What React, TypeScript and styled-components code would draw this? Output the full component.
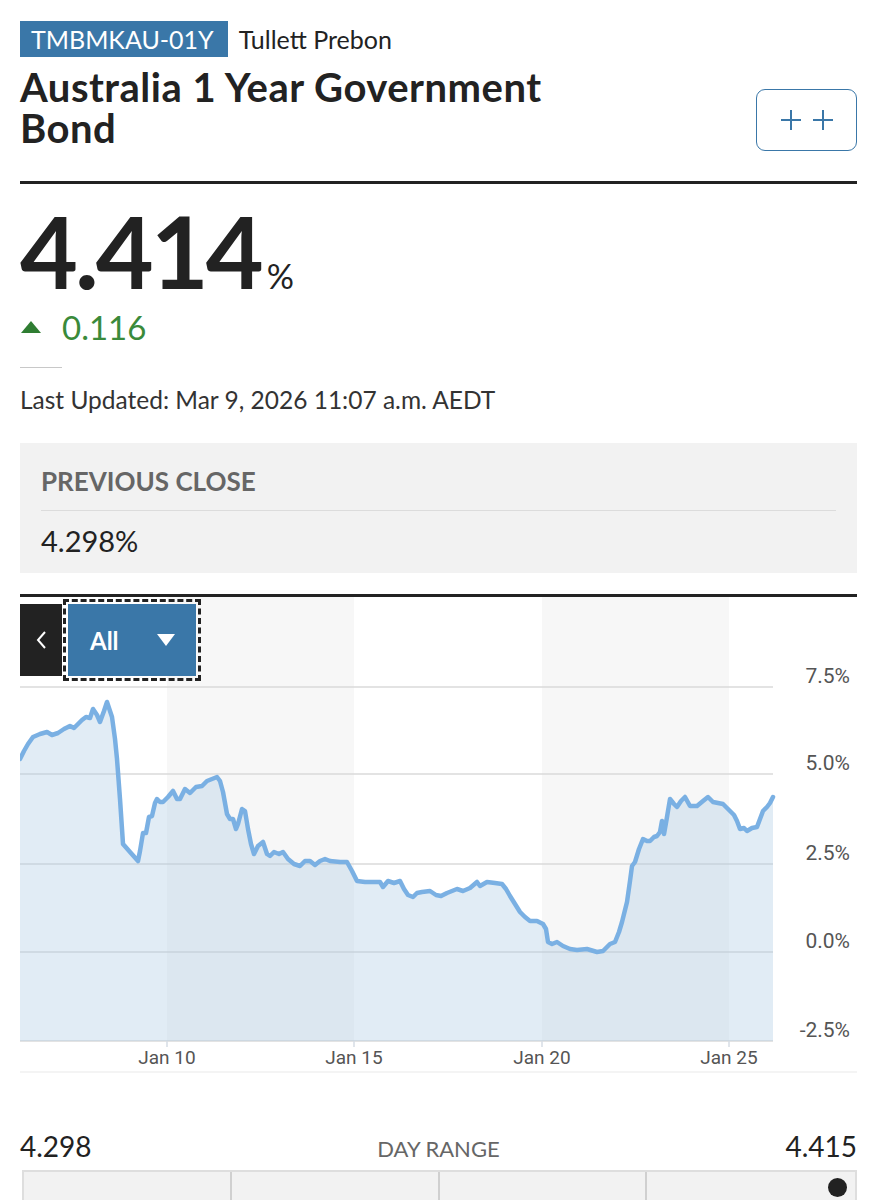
import React from "react";
import styled, { createGlobalStyle } from "styled-components";

const GlobalStyle = createGlobalStyle`
  html, body { margin: 0; padding: 0; background: #ffffff; }
  body { font-family: "Lato", "Noto Sans", sans-serif; color: #222; }
  * { box-sizing: border-box; }
`;

const Page = styled.div`
  width: 878px;
  padding: 21px 21px 0 20px;
  display: flex;
  flex-direction: column;
`;

const MetaRow = styled.div`
  display: flex;
  align-items: center;
  gap: 11px;
`;

const Badge = styled.span`
  background: #3a77a8;
  color: #fff;
  font-size: 25px;
  line-height: 36px;
  padding: 0 14px 0 11px;
`;

const Source = styled.span`
  font-size: 25px;
  color: #222;
`;

const TitleRow = styled.div`
  display: flex;
  justify-content: space-between;
  align-items: flex-start;
  margin-top: 10px;
`;

const Title = styled.h1`
  margin: 0;
  max-width: 570px;
  font-size: 40px;
  line-height: 41px;
  font-weight: 700;
  letter-spacing: 0.5px;
  color: #222;
`;

const CompareButton = styled.button`
  margin-top: 22px;
  width: 101px;
  height: 62px;
  border: 1.5px solid #3a77a8;
  border-radius: 9px;
  background: #fff;
  display: flex;
  align-items: center;
  justify-content: center;
  gap: 10px;
  padding: 0;
`;

const Rule = styled.div<{ $top: number }>`
  height: 3px;
  background: #222;
  margin-top: ${(p) => p.$top}px;
`;

const PriceRow = styled.div`
  display: flex;
  align-items: baseline;
  margin-top: 22px;
  height: 88px;
`;

const Price = styled.span`
  font-size: 100px;
  line-height: 88px;
  font-weight: 700;
  letter-spacing: -3px;
  color: #222;
`;

const Unit = styled.span`
  font-size: 34px;
  line-height: 40px;
  margin-left: 6px;
  color: #222;
`;

const ChangeRow = styled.div`
  display: flex;
  align-items: center;
  gap: 20px;
  margin-top: 15px;
  color: #3a8a3a;
`;

const ChangeValue = styled.span`
  font-size: 33px;
  line-height: 36px;
`;

const ShortRule = styled.div`
  width: 42px;
  height: 1px;
  background: #c8c8c8;
  margin-top: 22px;
`;

const Updated = styled.div`
  font-size: 24.5px;
  line-height: 30px;
  color: #333;
  margin-top: 17px;
`;

const StatBox = styled.div`
  margin-top: 28px;
  background: #f2f2f2;
  padding: 21px 21px 15px 21px;
`;

const StatLabel = styled.div`
  font-size: 26px;
  font-weight: 700;
  color: #666;
  line-height: 34px;
`;

const StatDivider = styled.div`
  height: 1px;
  background: #dcdcdc;
  margin: 12px 0 13px;
`;

const StatValue = styled.div`
  font-size: 29px;
  line-height: 34px;
  color: #222;
`;

const ChartSection = styled.div`
  position: relative;
  margin-top: 21px;
  border-top: 3px solid #222;
`;

const ChartSvg = styled.svg`
  display: block;
`;

const Controls = styled.div`
  position: absolute;
  top: 7px;
  left: 0;
  display: flex;
  gap: 6px;
`;

const BackButton = styled.button`
  width: 42px;
  height: 72px;
  background: #222;
  border: none;
  color: #fff;
  display: flex;
  align-items: center;
  justify-content: center;
  padding: 0;
`;

const RangeButton = styled.button`
  width: 128px;
  height: 72px;
  background: #3a77a8;
  border: none;
  outline: 3px dashed #222;
  outline-offset: 2px;
  color: #fff;
  font-family: "Lato", sans-serif;
  font-size: 24px;
  font-weight: 700;
  display: flex;
  align-items: center;
  justify-content: space-between;
  padding: 0 20px 0 22px;
`;

const RangeHead = styled.div`
  display: flex;
  justify-content: space-between;
  align-items: baseline;
  margin-top: 55px;
`;

const RangeEnd = styled.span`
  font-size: 28px;
  line-height: 34px;
  color: #222;
`;

const RangeLabel = styled.span`
  font-size: 22px;
  color: #666;
`;

const RangeBar = styled.div`
  margin: 7px 0 0 2px;
  height: 40px;
  background: #f2f2f2;
  border: 2px solid #dedede;
  border-bottom: none;
  display: grid;
  grid-template-columns: repeat(4, 1fr);
  position: relative;
`;

const RangeSegment = styled.div<{ $last?: boolean }>`
  border-right: ${(p) => (p.$last ? "none" : "2px solid #d0d0d0")};
`;

const RangeDot = styled.div`
  position: absolute;
  right: 8px;
  top: 6px;
  width: 19px;
  height: 19px;
  border-radius: 50%;
  background: #222;
`;

const raw: [number, number][] = [
  [20, 760], [24, 752], [28, 745], [33, 738], [40, 735], [47, 733], [52, 736], [58, 734],
  [64, 730], [70, 727], [74, 729], [77, 726], [82, 721], [86, 718], [90, 719], [93, 710],
  [97, 716], [100, 723], [104, 712], [107, 703], [110, 712], [112, 718], [115, 740],
  [117, 760], [120, 800], [123, 845], [130, 853], [138, 862], [140, 852], [143, 834],
  [146, 834], [149, 818], [152, 817], [155, 804], [157, 800], [160, 803], [163, 803],
  [168, 798], [173, 792], [177, 800], [180, 800], [185, 790], [190, 794], [196, 788],
  [202, 787], [207, 782], [212, 780], [217, 778], [220, 782], [223, 793], [227, 815],
  [230, 820], [233, 820], [236, 830], [238, 825], [242, 810], [245, 812], [248, 830],
  [251, 845], [254, 855], [258, 847], [263, 843], [267, 855], [270, 857], [274, 853],
  [279, 855], [283, 853], [288, 860], [294, 865], [300, 867], [305, 862], [310, 862],
  [315, 866], [320, 862], [325, 860], [330, 862], [340, 863], [347, 863], [352, 872],
  [357, 882], [365, 883], [372, 883], [380, 883], [383, 888], [388, 882], [394, 884],
  [400, 882], [404, 890], [408, 896], [413, 898], [417, 894], [422, 893], [430, 892],
  [436, 896], [441, 897], [447, 894], [452, 892], [457, 890], [463, 892], [470, 889],
  [477, 883], [480, 887], [487, 883], [495, 884], [502, 885], [506, 890], [510, 897],
  [515, 905], [520, 913], [525, 918], [530, 922], [537, 922], [543, 925], [546, 930],
  [548, 943], [552, 945], [557, 943], [563, 947], [570, 950], [577, 951], [587, 950],
  [597, 953], [603, 952], [607, 948], [610, 945], [615, 943], [619, 933], [622, 923],
  [627, 903], [630, 882], [632, 867], [635, 863], [639, 850], [643, 840], [647, 842],
  [650, 842], [654, 838], [657, 837], [660, 833], [662, 822], [664, 835], [667, 818],
  [670, 800], [674, 805], [677, 808], [681, 802], [685, 798], [690, 807], [697, 807],
  [703, 802], [708, 798], [713, 803], [718, 804], [723, 805], [727, 809], [730, 812],
  [734, 816], [737, 822], [740, 830], [744, 829], [747, 832], [752, 829], [757, 828],
  [760, 820], [763, 812], [767, 808], [770, 804], [773, 798],
];

const OX = 20;
const OY = 598;
const pts = raw.map(([x, y]) => [x - OX, y - OY] as [number, number]);
const linePath = pts.map(([x, y], i) => `${i ? "L" : "M"}${x},${y}`).join(" ");
const BOTTOM = 1042 - OY;
const PLOT_R = 773 - OX;
const areaPath = `${linePath} L${PLOT_R},${BOTTOM} L0,${BOTTOM} Z`;

const grid = [
  { y: 688, label: "7.5%" },
  { y: 775, label: "5.0%" },
  { y: 865, label: "2.5%" },
  { y: 953, label: "0.0%" },
  { y: 1042, label: "-2.5%" },
];

const ticks = [
  { x: 167, label: "Jan 10" },
  { x: 354, label: "Jan 15" },
  { x: 542, label: "Jan 20" },
  { x: 729, label: "Jan 25" },
];

const bands = [
  [167, 354],
  [542, 729],
];

function Chart() {
  return (
    <ChartSvg width={837} height={477} viewBox="0 0 837 477">
      {bands.map(([a, b]) => (
        <rect key={a} x={a - OX} y={0} width={b - a} height={BOTTOM} fill="#f7f7f7" />
      ))}
      {grid.map((g) => (
        <line key={g.label} x1={0} x2={PLOT_R} y1={g.y - OY} y2={g.y - OY} stroke="#dadada" strokeWidth={1.5} />
      ))}
      <path d={areaPath} fill="rgb(170,200,226)" fillOpacity={0.35} />
      <path d={linePath} fill="none" stroke="#7ab0e3" strokeWidth={4.5} strokeLinejoin="round" strokeLinecap="round" />
      {ticks.map((t) => (
        <line key={t.label} x1={t.x - OX} x2={t.x - OX} y1={BOTTOM} y2={BOTTOM + 6} stroke="#d6dde4" strokeWidth={1.5} />
      ))}
      {grid.map((g) => (
        <text
          key={g.label}
          x={850 - OX}
          y={g.y - OY - 4}
          textAnchor="end"
          fontFamily="Roboto, sans-serif"
          fontSize={21}
          fill="#555"
        >
          {g.label}
        </text>
      ))}
      {ticks.map((t) => (
        <text
          key={t.label}
          x={t.x - OX}
          y={1065 - OY}
          textAnchor="middle"
          fontFamily="Roboto, sans-serif"
          fontSize={19}
          fill="#555"
        >
          {t.label}
        </text>
      ))}
      <line x1={0} x2={837} y1={1073 - OY} y2={1073 - OY} stroke="#f0f0f0" strokeWidth={1.5} />
    </ChartSvg>
  );
}

const Plus = () => (
  <svg width="22" height="22" viewBox="0 0 22 22">
    <path d="M11 1 V21 M1 11 H21" stroke="#3a77a8" strokeWidth="2" fill="none" />
  </svg>
);

export default function App() {
  return (
    <>
      <GlobalStyle />
      <Page>
        <MetaRow>
          <Badge>TMBMKAU-01Y</Badge>
          <Source>Tullett Prebon</Source>
        </MetaRow>
        <TitleRow>
          <Title>Australia 1 Year Government Bond</Title>
          <CompareButton aria-label="Compare">
            <Plus />
            <Plus />
          </CompareButton>
        </TitleRow>
        <Rule $top={30} />
        <PriceRow>
          <Price>4.414</Price>
          <Unit>%</Unit>
        </PriceRow>
        <ChangeRow>
          <svg width="22" height="14" viewBox="0 0 22 14">
            <polygon points="11,1 21,13 1,13" fill="#2f7d32" />
          </svg>
          <ChangeValue>0.116</ChangeValue>
        </ChangeRow>
        <ShortRule />
        <Updated>Last Updated: Mar 9, 2026 11:07 a.m. AEDT</Updated>
        <StatBox>
          <StatLabel>PREVIOUS CLOSE</StatLabel>
          <StatDivider />
          <StatValue>4.298%</StatValue>
        </StatBox>
        <ChartSection>
          <Chart />
          <Controls>
            <BackButton aria-label="Back">
              <svg width="12" height="20" viewBox="0 0 12 20">
                <path d="M10 2 L3 10 L10 18" stroke="#fff" strokeWidth="2" fill="none" />
              </svg>
            </BackButton>
            <RangeButton>
              <span>All</span>
              <svg width="20" height="14" viewBox="0 0 20 14">
                <polygon points="1,1 19,1 10,13" fill="#fff" />
              </svg>
            </RangeButton>
          </Controls>
        </ChartSection>
        <RangeHead>
          <RangeEnd>4.298</RangeEnd>
          <RangeLabel>DAY RANGE</RangeLabel>
          <RangeEnd>4.415</RangeEnd>
        </RangeHead>
        <RangeBar>
          <RangeSegment />
          <RangeSegment />
          <RangeSegment />
          <RangeSegment $last />
          <RangeDot />
        </RangeBar>
      </Page>
    </>
  );
}
